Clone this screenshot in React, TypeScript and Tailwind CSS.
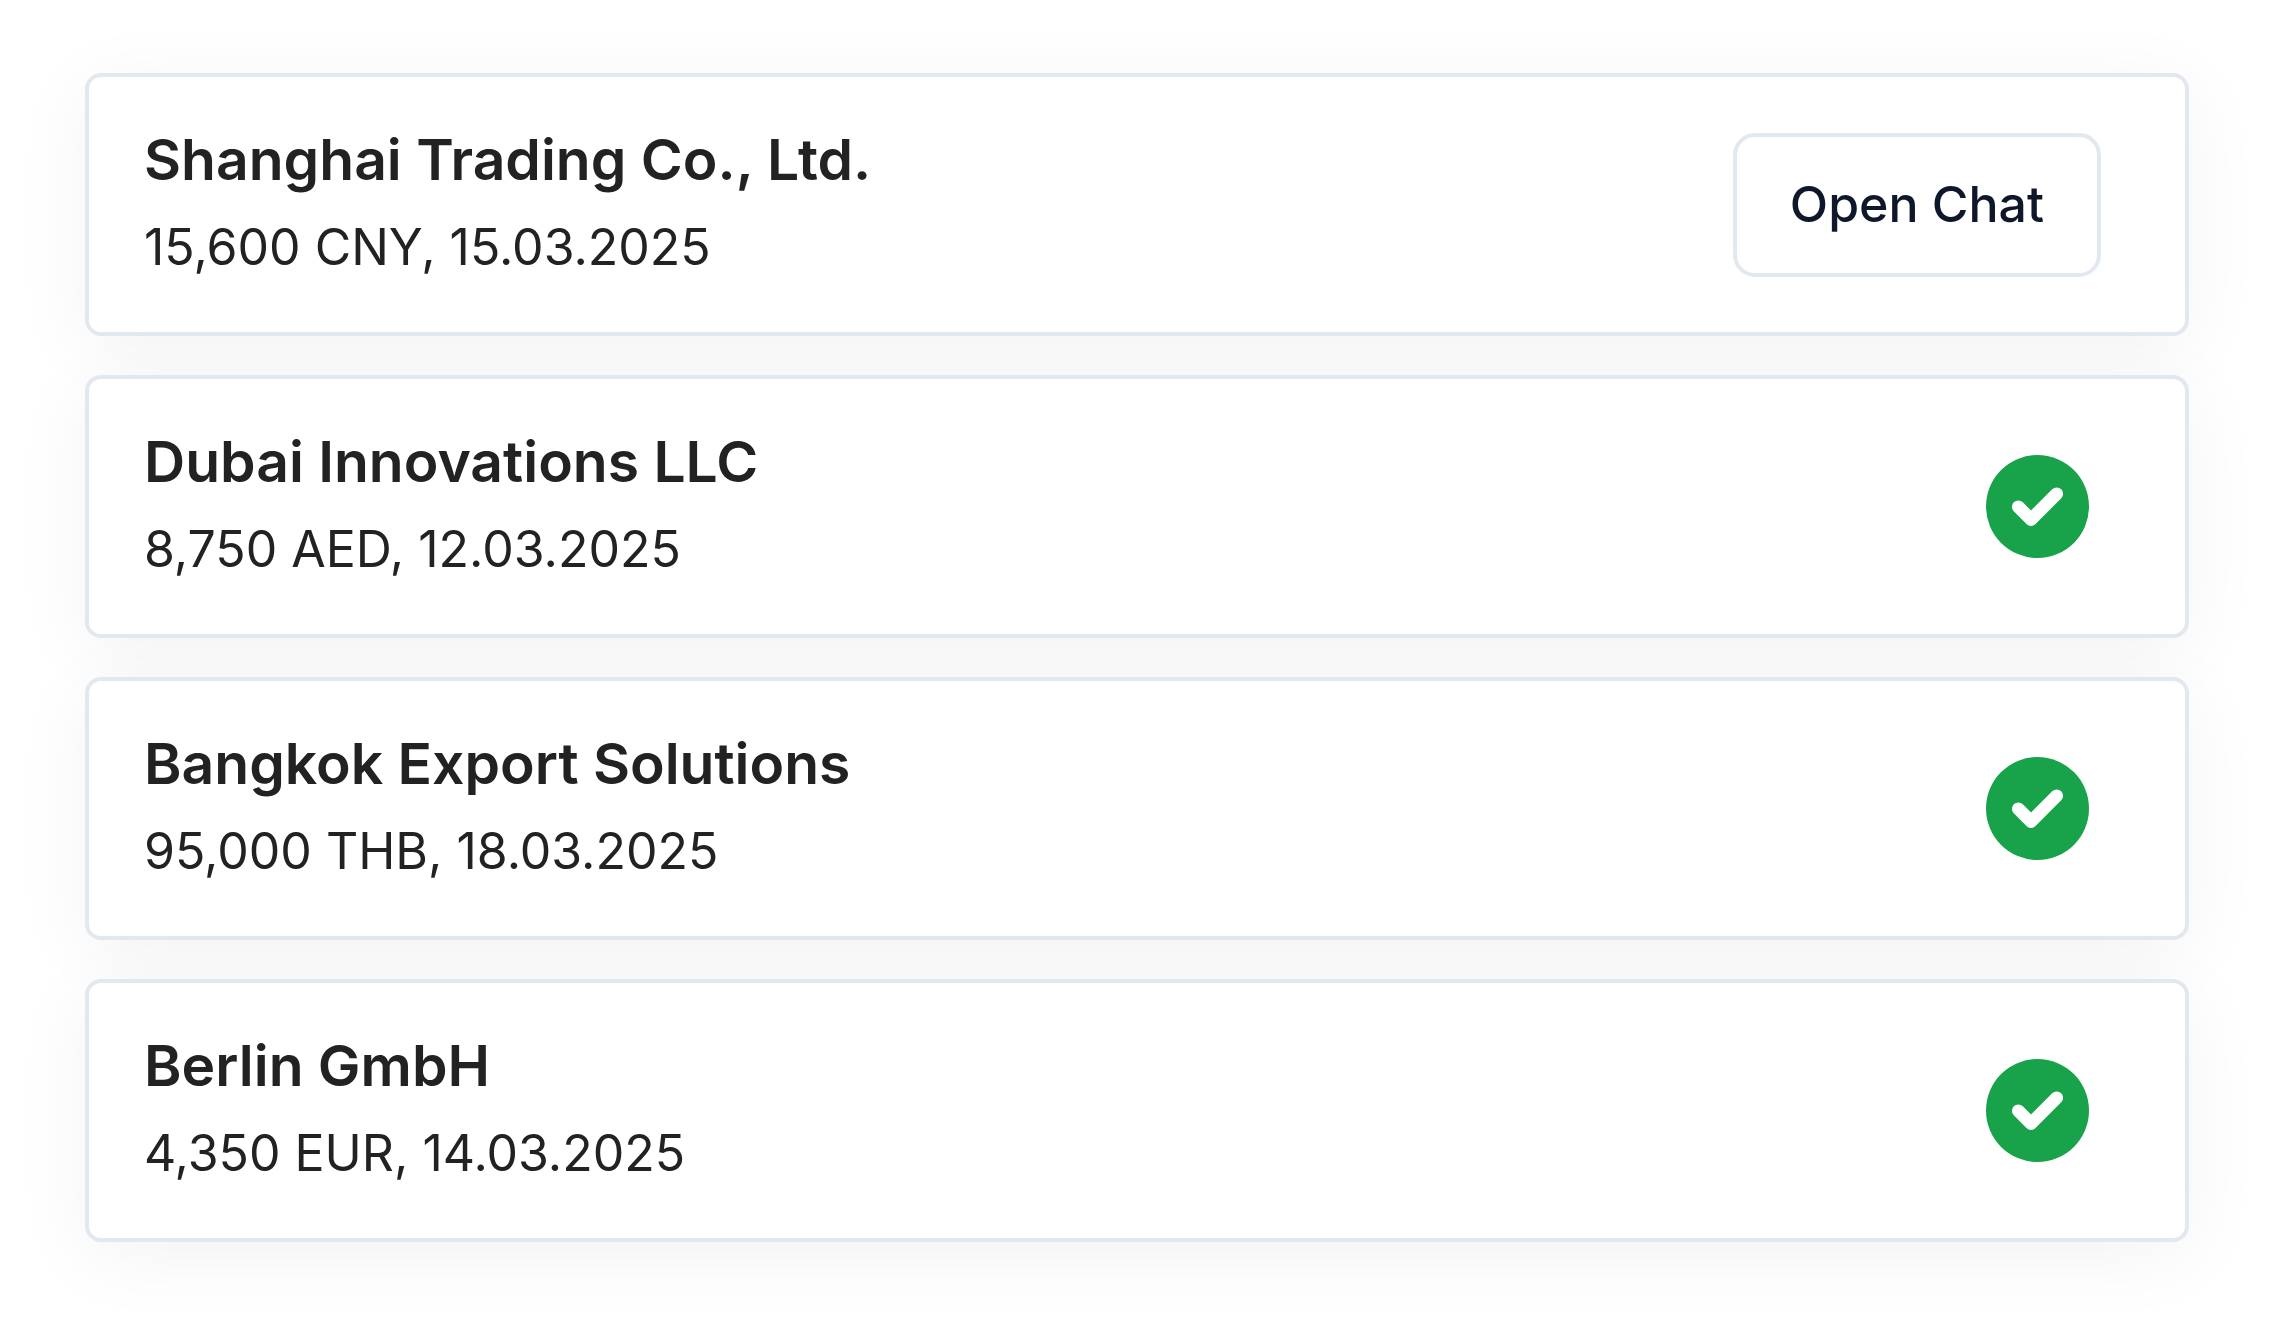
import React from 'react';

interface Payment {
  id: string;
  company: string;
  amount: string;
  date: string;
  status: 'chat' | 'done';
}

const payments: Payment[] = [
  { id: 'shanghai', company: 'Shanghai Trading Co., Ltd.', amount: '15,600 CNY', date: '15.03.2025', status: 'chat' },
  { id: 'dubai', company: 'Dubai Innovations LLC', amount: '8,750 AED', date: '12.03.2025', status: 'done' },
  { id: 'bangkok', company: 'Bangkok Export Solutions', amount: '95,000 THB', date: '18.03.2025', status: 'done' },
  { id: 'berlin', company: 'Berlin GmbH', amount: '4,350 EUR', date: '14.03.2025', status: 'done' },
];

function DoneIcon() {
  return (
    <svg className="mr-3 size-[103px]" viewBox="0 0 103 103" role="img" aria-label="Completed">
      <circle cx="51.5" cy="51.5" r="51.5" fill="#18a34a" />
      <path d="M32.3 51.8 L45 64.5 L70.7 38.8" fill="none" stroke="#fff" strokeWidth="12.8" strokeLinecap="round" strokeLinejoin="round" />
    </svg>
  );
}

function PaymentCard({ payment }: { payment: Payment }) {
  return (
    <li className="flex items-center justify-between rounded-[16px] border-4 border-[#e2e8f0] bg-white py-12 pr-[84px] pl-[55px] shadow-[0_14px_80px_rgba(0,0,0,0.05)]">
      <div>
        <h2 className="text-[57px] leading-[70px] font-semibold">{payment.company}</h2>
        <p className="mt-[15px] text-[50px] leading-[74px]">
          {payment.amount}, {payment.date}
        </p>
      </div>
      {payment.status === 'chat' ? (
        <button type="button" className="rounded-[22px] border-4 border-[#e2e8f0] bg-white px-[53px] pt-[30px] pb-8 text-[50px] leading-[74px] font-medium text-[#0f172a]">
          Open Chat
        </button>
      ) : (
        <DoneIcon />
      )}
    </li>
  );
}

export default function App() {
  return (
    <main className="min-h-screen bg-white pt-[73px] pr-[84px] pl-[85px] font-['Inter',sans-serif] text-[#222222]">
      <ul className="flex flex-col gap-[39px]">
        {payments.map(payment => (
          <PaymentCard key={payment.id} payment={payment} />
        ))}
      </ul>
    </main>
  );
}
